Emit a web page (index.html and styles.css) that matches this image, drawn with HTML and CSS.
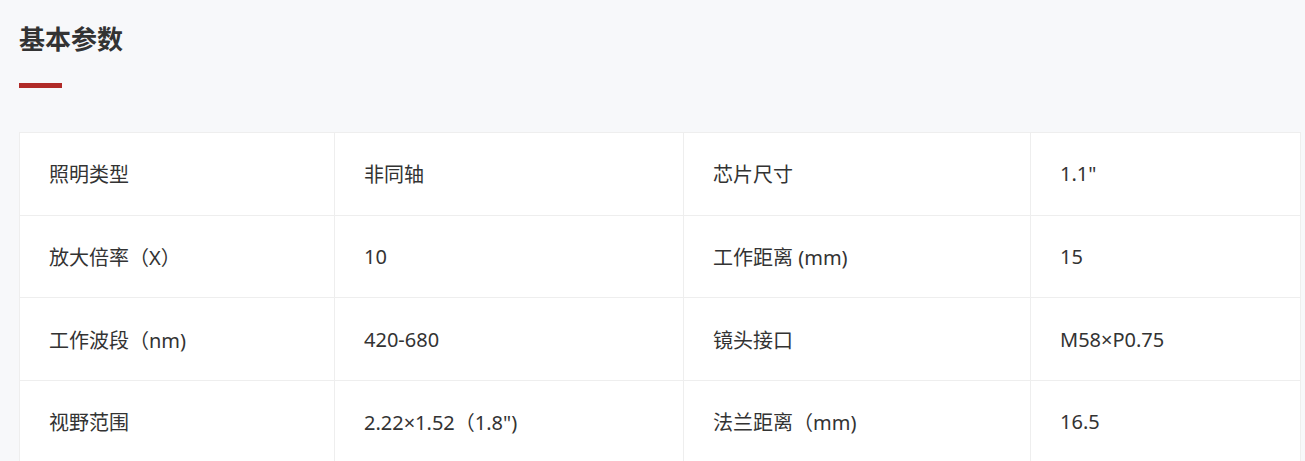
FILE: index.html
```html
<!DOCTYPE html>
<html lang="zh-CN">
<head>
<meta charset="utf-8">
<title>基本参数</title>
<link rel="stylesheet" href="styles.css">
</head>
<body>
<section class="params">
  <h2 class="params-title">基本参数</h2>
  <div class="params-bar"></div>
  <div class="params-table">
    <div class="cell">照明类型</div>
    <div class="cell">非同轴</div>
    <div class="cell">芯片尺寸</div>
    <div class="cell">1.1"</div>

    <div class="cell">放大倍率（X）</div>
    <div class="cell">10</div>
    <div class="cell">工作距离 (mm)</div>
    <div class="cell">15</div>

    <div class="cell">工作波段（nm)</div>
    <div class="cell">420-680</div>
    <div class="cell">镜头接口</div>
    <div class="cell">M58×P0.75</div>

    <div class="cell">视野范围</div>
    <div class="cell">2.22×1.52（1.8")</div>
    <div class="cell">法兰距离（mm)</div>
    <div class="cell">16.5</div>
  </div>
</section>
</body>
</html>
```

FILE: styles.css
```css
html, body {
  margin: 0;
  padding: 0;
  background: #f7f8fa;
}

body {
  font-family: "Noto Sans CJK SC", "Noto Sans", sans-serif;
  color: #333333;
  overflow: hidden;
}

.params {
  padding: 19px 5px 0 19px;
}

.params-title {
  margin: 0;
  font-size: 26px;
  font-weight: 700;
  line-height: 38px;
  color: #333333;
}

.params-bar {
  width: 43px;
  height: 5px;
  background: #b02a27;
  margin-top: 26px;
}

.params-table {
  margin-top: 44px;
  display: grid;
  grid-template-columns: 315px 349px 347px 270px;
  grid-auto-rows: 82.67px;
  background: #ffffff;
  border-top: 1px solid #eeeeee;
  border-left: 1px solid #eeeeee;
  width: 1281px;
}

.cell {
  display: flex;
  align-items: center;
  padding-left: 29px;
  font-family: "Noto Sans", "Noto Sans CJK SC", sans-serif;
  font-size: 20px;
  color: #333333;
  border-right: 1px solid #eeeeee;
  border-bottom: 1px solid #eeeeee;
  box-sizing: border-box;
}
```
